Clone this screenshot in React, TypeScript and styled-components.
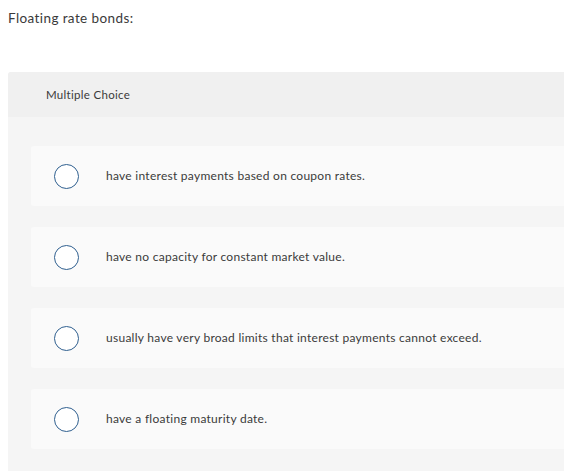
import styled, { createGlobalStyle } from "styled-components";

const GlobalStyle = createGlobalStyle`
  html, body {
    margin: 0;
    padding: 0;
    background: #ffffff;
    overflow: hidden;
  }
  body {
    font-family: "Lato", "Liberation Sans", sans-serif;
    color: #333333;
  }
`;

const options = [
  "have interest payments based on coupon rates.",
  "have no capacity for constant market value.",
  "usually have very broad limits that interest payments cannot exceed.",
  "have a floating maturity date.",
];

export default function App() {
  return (
    <>
      <GlobalStyle />
      <Page>
        <Question>Floating rate bonds:</Question>
        <Panel>
          <PanelHeader>Multiple Choice</PanelHeader>
          <OptionList>
            {options.map((text) => (
              <OptionCard key={text}>
                <Radio />
                <OptionText>{text}</OptionText>
              </OptionCard>
            ))}
          </OptionList>
        </Panel>
      </Page>
    </>
  );
}

const Page = styled.div`
  width: 564px;
  height: 471px;
  padding: 10px 0 0 8px;
  box-sizing: border-box;
  overflow: hidden;
`;

const Question = styled.div`
  font-size: 13.5px;
  line-height: 17px;
  letter-spacing: 0.4px;
  color: #3a3a3a;
`;

const Panel = styled.div`
  margin-top: 45px;
  width: 620px;
  background: #f5f5f5;
  border-radius: 3px 0 0 0;
  padding-bottom: 40px;
`;

const PanelHeader = styled.div`
  height: 45px;
  background: #f0f0f0;
  display: flex;
  align-items: center;
  padding-left: 38px;
  font-size: 11.5px;
  letter-spacing: 0.3px;
  color: #3a3a3a;
  border-radius: 3px 0 0 0;
`;

const OptionList = styled.div`
  display: flex;
  flex-direction: column;
  gap: 21px;
  padding: 29px 0 0 23px;
`;

const OptionCard = styled.div`
  height: 60px;
  background: #fafafa;
  border-radius: 3px 0 0 3px;
  display: flex;
  align-items: center;
  padding-left: 23px;
`;

const Radio = styled.span`
  width: 23px;
  height: 23px;
  border: 1.5px solid #2f5f8f;
  border-radius: 50%;
  background: #ffffff;
  flex-shrink: 0;
`;

const OptionText = styled.span`
  margin-left: 27px;
  margin-bottom: 2px;
  font-size: 12px;
  letter-spacing: 0.27px;
  color: #3a3a3a;
`;
